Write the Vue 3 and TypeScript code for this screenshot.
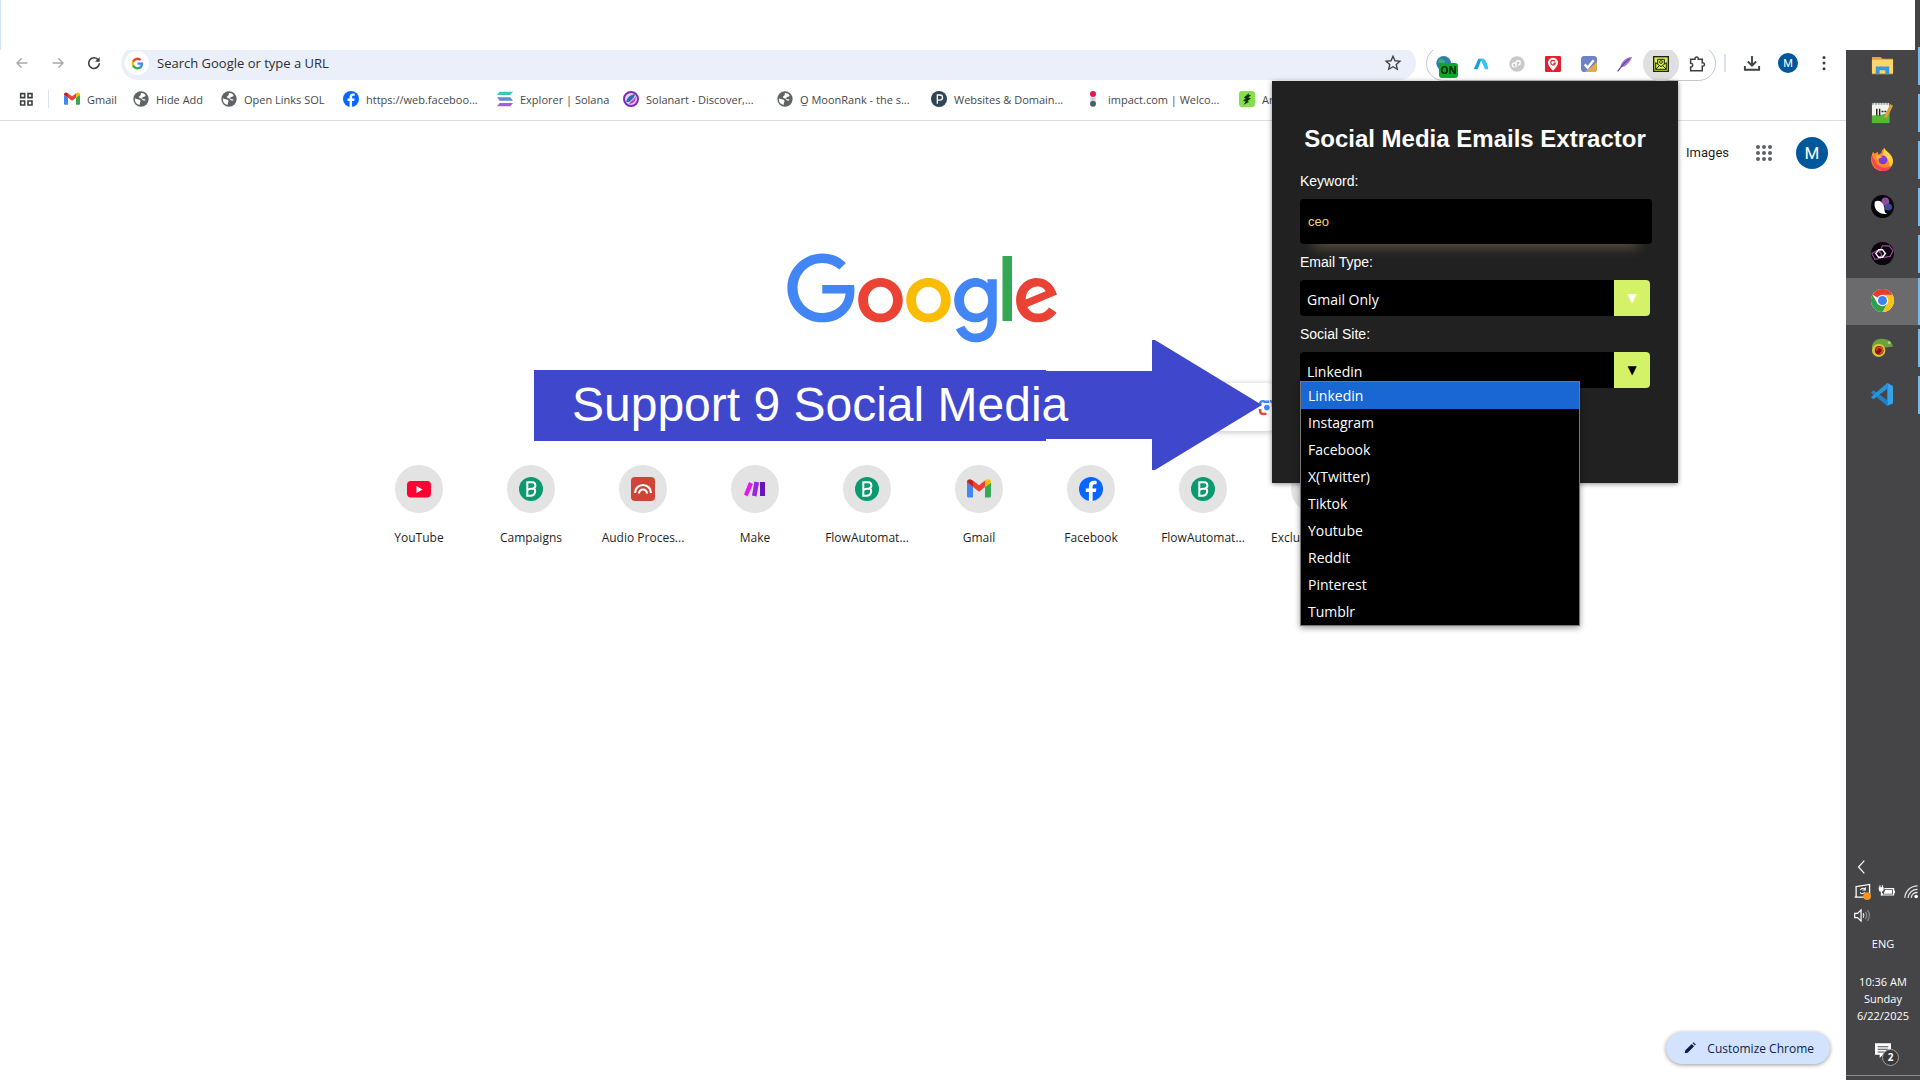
<script setup lang="ts">
import { ref } from 'vue'

interface Entry {
  icon: string
  label: string
}

// Inner markup of every 24x24 icon
const icons: Record<string, string> = {
  back: '<path d="M20 12H4.500M11.500 5l-7 7 7 7" fill="none" stroke="#a5a8ab" stroke-width="2"/>',
  forward: '<path d="M4 12h15.500M12.500 5l7 7-7 7" fill="none" stroke="#a5a8ab" stroke-width="2"/>',
  reload: '<path d="M18.500 7.500A8 8 0 1 0 20 12.500" fill="none" stroke="#3c4043" stroke-width="2.400"/><path d="M20.500 3v7h-7z" fill="#3c4043"/>',
  googleG:
    '<path d="M22.500 12.200c0-.7-.1-1.400-.2-2H12v4.100h5.900c-.3 1.400-1 2.500-2.200 3.300v2.800h3.600c2-1.900 3.200-4.700 3.200-8.200z" fill="#4285f4"/><path d="M12 23c3 0 5.500-1 7.300-2.600l-3.600-2.800c-1 .7-2.200 1.100-3.700 1.100-2.900 0-5.300-1.900-6.200-4.500H2.200V17C4 20.600 7.700 23 12 23z" fill="#34a853"/><path d="M5.800 14.100a6.600 6.600 0 0 1 0-4.200V7.100H2.200a11 11 0 0 0 0 9.800z" fill="#fbbc05"/><path d="M12 5.400c1.600 0 3.100.6 4.200 1.600L19.400 4A11 11 0 0 0 2.200 7.100l3.600 2.800C6.700 7.300 9.100 5.400 12 5.400z" fill="#ea4335"/>',
  star: '<path d="M12 3l2.700 6 6.500.6-4.900 4.300 1.400 6.400L12 17l-5.700 3.300 1.400-6.400-4.900-4.300 6.500-.6z" fill="none" stroke="#3c4043" stroke-width="1.800"/>',
  apps: '<path d="M4 4h6v6H4zM15 4h6v6h-6zM4 15h6v6H4zM15 15h6v6h-6z" fill="none" stroke="#3c4043" stroke-width="2.400"/>',
  gmail:
    '<path d="M1.600 20.500H6V10L0 5.500V19c0 .9.700 1.500 1.600 1.500z" fill="#4285f4"/><path d="M18 20.500h4.400c.9 0 1.600-.7 1.600-1.500V5.500L18 10z" fill="#34a853"/><path d="M18 3.800V10l6-4.500V5c0-2.300-2.600-3.500-4.400-2.200z" fill="#fbbc04"/><path d="M6 10V3.500l6 4.700 6-4.700V10l-6 4.700z" fill="#ea4335"/><path d="M0 5v.5L6 10V3.800L4.400 2.800C2.600 1.500 0 2.700 0 5z" fill="#c5221f"/>',
  globe:
    '<circle cx="12" cy="12" r="11.500" fill="#5f6368"/><path d="M3 11c2 2 6 1 8 3 1 2-1 3-1 7-5-1-8-5-7-10zM12 3c3 0 6 1 7 4-1 2-4 1-5 3-2 2 3 2 5 3-1 2-3 2-4 1-2-1-1-3-4-3-3-1-2-4 0-4z" fill="#fff"/>',
  facebook:
    '<circle cx="12" cy="12" r="12" fill="#0866ff"/><path d="M13.600 24v-9h3.200l.6-3.600h-3.800V9.200c0-1.300.7-2 2.100-2h1.900V4c-.8-.2-1.700-.3-2.700-.3-3 0-5 1.800-5 5v2.700H6.800V15h3.100v9z" fill="#fff"/>',
  solana:
    '<path d="M4 1h20l-4 5H0z" fill="#3cc9b4"/><path d="M0 9.500h20l4 5H4z" fill="#5f8fc9"/><path d="M4 18h20l-4 5H0z" fill="#a35fd6"/>',
  solanart:
    '<circle cx="12" cy="12" r="10.500" fill="#dfd3ff" stroke="#7f2bb8" stroke-width="3"/><path d="M5 17c0-6 6-12 13-12-1 6-5 8-8 11z" fill="#2d6cb0"/><path d="M9 19c3-4 8-6 10-11 1 7-4 12-10 11z" fill="#c236c9"/>',
  plesk:
    '<circle cx="12" cy="12" r="12" fill="#2f4454"/><path d="M9.500 19V6h4a3.800 3.800 0 0 1 0 7.600h-4" fill="none" stroke="#fff" stroke-width="2"/>',
  impact:
    '<circle cx="12" cy="4.500" r="4.500" fill="#e8134f"/><path d="M8 9.500h8v5H8z" fill="#c9d3d3"/><circle cx="12" cy="19" r="4.500" fill="#4a5f6c"/>',
  artLeaf:
    '<rect width="24" height="24" rx="5" fill="#86e04a"/><path d="M15 3L7 10l3 1-4 4 4 .5-3 5 8-4-2-1.500 5-4-4-1 4-4-4-.500z" fill="#14300b"/>',
  extGlobe:
    '<circle cx="10" cy="11" r="11" fill="#2b7fae"/><path d="M4 4c4 0 8 2 9 5l-5 3-6-3zM12 14l6-2v6l-6 2z" fill="#3fae74"/>',
  extA: '<path d="M1 20L8 4h5L7 20z" fill="#1b9fdb"/><path d="M11 4h5c4 3 6 9 7 16h-5z" fill="#35c4ee"/>',
  extP: '<circle cx="12" cy="12" r="11.500" fill="#c9c9c9"/><path d="M8 16.500a3 3 0 1 1 2.500-4.500M10.500 17V10a3.200 3.200 0 1 1 3.200 3.500" fill="none" stroke="#fff" stroke-width="2"/>',
  extPin:
    '<rect width="24" height="24" rx="2" fill="#e2202e"/><path d="M12 2.500a7.500 7.500 0 0 1 7.500 7.500c0 5-7.500 12-7.500 12S4.500 15 4.500 10A7.500 7.500 0 0 1 12 2.500z" fill="#fff"/><path d="M14.800 8a3.400 3.400 0 1 0 .6 2.700H12.500" fill="none" stroke="#e2202e" stroke-width="1.800"/>',
  extCheck:
    '<rect width="24" height="24" rx="5" fill="#6f82c9"/><path d="M24 9v10a5 5 0 0 1-5 5H6z" fill="#dfab4f"/><path d="M5.500 12.500l4.500 5 9-11" fill="none" stroke="#fff" stroke-width="3.600"/>',
  extFeather:
    '<path d="M23 1C14 2 6 8 5 17c7 0 13-5 18-16z" fill="#a07ad4"/><path d="M1 23C6 16 12 9 19 4" fill="none" stroke="#6b3fa6" stroke-width="1.800"/>',
  extMail:
    '<rect x="1" y="1" width="22" height="22" fill="#d9ee4a" stroke="#1f2408" stroke-width="2"/><path d="M4 10v10h16V10M7 12V5h10v7M4 10l8 6 8-6M4 20l6-6M20 20l-6-6" fill="none" stroke="#1f2408" stroke-width="1.500"/><circle cx="12" cy="9" r="2.200" fill="none" stroke="#1f2408" stroke-width="1.300"/>',
  puzzle:
    '<path d="M3.500 5.500h5.800c-.6-3.800 5-3.800 4.400 0h5.300v5c4-.5 4 5 0 4.400v6H3.500v-5c3.600.2 3.600-5 0-4.800z" fill="none" stroke="#3c4043" stroke-width="2"/>',
  download:
    '<path d="M12 2.500V15M6.500 10l5.500 5.500 5.500-5.500M2.500 16v5h19v-5" fill="none" stroke="#3c4043" stroke-width="2.500"/>',
  dots: '<circle cx="12" cy="4.500" r="2" fill="#3c4043"/><circle cx="12" cy="12" r="2" fill="#3c4043"/><circle cx="12" cy="19.500" r="2" fill="#3c4043"/>',
  grid: [4, 12, 20]
    .map((y) => [4, 12, 20].map((x) => `<circle cx="${x}" cy="${y}" r="2.700" fill="#5f6368"/>`).join(''))
    .join(''),
  lens: '<path d="M3 9V7a4 4 0 0 1 4-4h2M8 4h8" fill="none" stroke="#4285f4" stroke-width="3.500"/><path d="M3 14v3a4 4 0 0 0 4 4h5" fill="none" stroke="#ea4335" stroke-width="3.500"/><circle cx="12.500" cy="12" r="4" fill="#4285f4"/><path d="M21 11V7a4 4 0 0 0-4-4" fill="none" stroke="#4285f4" stroke-width="3.500"/>',
  youtube: '<rect y="4" width="24" height="16.500" rx="4" fill="#ff0033"/><path d="M9.500 9v7l6-3.500z" fill="#fff"/>',
  brevo:
    '<circle cx="12" cy="12" r="12" fill="#0b996e"/><path d="M8.300 18.800V5.200h5a3.200 3.200 0 0 1 1 6.200c3.300 1.200 2 7.400-2.600 7.400zM8.300 14c0-1.500 2-2.600 6-2.600" fill="none" stroke="#fff" stroke-width="2"/>',
  audio:
    '<rect width="24" height="24" rx="4" fill="#cf4436"/><path d="M4 16a8 8 0 0 1 16 0M8 16.500a4 4 0 0 1 8 0" fill="none" stroke="#fff" stroke-width="2.200"/>',
  make: '<path d="M6 5l4 2-5.500 12.500L1 17.500z" fill="#e01bea"/><path d="M11.500 4.500l4.500 1-2.500 14-4.500-1z" fill="#9a24e0"/><path d="M17 5h5v14h-5z" fill="#6516b8"/>',
  blank: '',
  pencil: '<path d="M3 21l1-5L15 5l4 4L8 20zM16.500 3.500L18 2l4 4-1.500 1.500z" fill="#0b1d4d"/>',
  explorer:
    '<path d="M1 3h9l2 2h11v16H1z" fill="#e3a72f"/><path d="M1 6h22v14H1z" fill="#fbd66b"/><path d="M5 21v-8h14v8h-4v-4H9v4z" fill="#3a96dd"/>',
  notepad:
    '<path d="M1 2h18v21H1z" fill="#f2f5ee"/><path d="M1 15c7 0 12-1 18-3v11H1z" fill="#56b635"/><path d="M1 3h18" stroke="#9aa39a" stroke-width="2" stroke-dasharray="2 1"/><path d="M6 8v7M9 8v7M11 11h2M14 11h2" stroke="#222" stroke-width="1.500"/><path d="M14 16l6-13 3 2-6 12-3 1z" fill="#d9a03c"/>',
  firefox:
    '<path d="M14 0c1 3 4 4 7 8 5 7 0 16-9 16S-2 15 1 7l1-3 2 2 3-2 1 3 3-2c0-2 1-4 3-5z" fill="#ff8a2a"/><path d="M14 0c1 3 4 4 7 8 3 5 2 10-2 13 1-7-2-12-7-14z" fill="#ffd43c"/><path d="M1 8c-1 8 3 15 11 16 5 0 8-2 10-6-7 5-15 2-18-5z" fill="#ff3e61"/><circle cx="12.500" cy="12.500" r="4.500" fill="#7a3ddb"/><path d="M5 8c3-1 5 0 7 2-3 0-4 1-5 3z" fill="#ffb23c"/>',
  petal:
    '<circle cx="12" cy="12" r="12" fill="#08070d"/><ellipse cx="15" cy="7" rx="4" ry="4.500" fill="#8d4c9e"/><ellipse cx="18" cy="12.500" rx="4" ry="3.500" fill="#414a9c"/><path d="M4 7c5-3 9 1 10 7 0 4 1 5 3 5.500C10 21 2 16 4 7z" fill="#fff"/>',
  rings:
    '<circle cx="12" cy="12" r="12" fill="#0b050d"/><path d="M12 4h7l4 5-3 6-7 1-4-6zM1 12l5-3 5 3-1 5-6 1z" fill="none" stroke="#9a4a9e" stroke-width="1.200"/><path d="M8 8h4l3 4-3 4H8l-3-4z" fill="none" stroke="#fff" stroke-width="1.500"/>',
  chrome:
    '<circle cx="12" cy="12" r="12" fill="#fff"/><path d="M12 12L1.600 6A12 12 0 0 1 22.400 6z" fill="#e33b2e"/><path d="M12 6h10.400A12 12 0 0 1 12 24l5.200-9z" fill="#fbc116"/><path d="M1.600 6l5.200 9L12 18l5 -3-5 9A12 12 0 0 1 1.600 6z" fill="#2da04b"/><circle cx="12" cy="12" r="6" fill="#fff"/><circle cx="12" cy="12" r="4.700" fill="#3f83f0"/>',
  chameleon:
    '<path d="M1 12C1 5 7 2 13 3c5 0 9 3 10 8l-8 1c-4-2-8-1-8 3z" fill="#6fa03f"/><circle cx="19" cy="7" r="1.500" fill="#b6d67a"/><circle cx="8" cy="15" r="7" fill="#d8c431"/><circle cx="8.500" cy="15" r="4.500" fill="#7d1418"/><path d="M6 15a3 3 0 1 1 3 3" fill="none" stroke="#e24a2b" stroke-width="1.500"/>',
  vscode:
    '<path d="M17 0l6 3v18l-6 3z" fill="#35a3ea"/><path d="M17 24L0 10l2.500-2.500L17 18z" fill="#1f82c8"/><path d="M17 0v6L2.500 17 0 14.500z" fill="#2a93dc"/>',
  chevron: '<path d="M16 1L6 12l10 11" fill="none" stroke="#fff" stroke-width="2"/>',
  update:
    '<path d="M3 5l19-3v18H3zM1 20h14" fill="none" stroke="#fff" stroke-width="1.800"/><path d="M9 10c2-4 7-3 7 0M16 6v4h-4M15 13c-2 3-6 3-6 0" fill="none" stroke="#fff" stroke-width="1.500"/><circle cx="18.500" cy="18.500" r="5.500" fill="#f7941d"/>',
  battery:
    '<path d="M9 8h13v9H6v-3" fill="none" stroke="#fff" stroke-width="1.600"/><path d="M10 10h10v5H8z" fill="#fff"/><path d="M22 10.500h2v4h-2zM1 6h7v3a3.500 3.500 0 0 1-7 0zM2 3h1.500v3H2zM5.500 3H7v3H5.500zM4 12h1.500v6H4z" fill="#fff"/>',
  wifi: '<path d="M4 21A18 18 0 0 1 22 4M8.500 21A13 13 0 0 1 22 9M13 21a8 8 0 0 1 9-7.500" fill="none" stroke="#e4e4e4" stroke-width="1.800"/><circle cx="20" cy="19" r="2.500" fill="#fff"/>',
  speaker:
    '<path d="M1 9h4l5-5v16l-5-5H1z" fill="none" stroke="#fff" stroke-width="1.700"/><path d="M13 9c1.500 2 1.500 4 0 6" fill="none" stroke="#fff" stroke-width="1.600"/><path d="M16 7c2.500 3 2.500 7 0 10M19 4.500c3.500 4.500 3.500 10.500 0 15" fill="none" stroke="#8d8d8f" stroke-width="1.600"/>',
  notice: '<path d="M0 2h24v17H12l-5 5v-5H0z" fill="#fff"/><path d="M4 7h16M4 11h16M4 15h10" stroke="#454547" stroke-width="1.600"/>',
}

const bookmarks: Entry[] = [
  { icon: 'gmail', label: 'Gmail' },
  { icon: 'globe', label: 'Hide Add' },
  { icon: 'globe', label: 'Open Links SOL' },
  { icon: 'facebook', label: 'https://web.faceboo...' },
  { icon: 'solana', label: 'Explorer | Solana' },
  { icon: 'solanart', label: 'Solanart - Discover,...' },
  { icon: 'globe', label: 'O̲ MoonRank - the s...' },
  { icon: 'plesk', label: 'Websites & Domain...' },
  { icon: 'impact', label: 'impact.com | Welco...' },
  { icon: 'artLeaf', label: 'Ar' },
]

const extensions = ['extGlobe', 'extA', 'extP', 'extPin', 'extCheck', 'extFeather', 'extMail', 'puzzle']

const shortcuts: Entry[] = [
  { icon: 'youtube', label: 'YouTube' },
  { icon: 'brevo', label: 'Campaigns' },
  { icon: 'audio', label: 'Audio Proces...' },
  { icon: 'make', label: 'Make' },
  { icon: 'brevo', label: 'FlowAutomat...' },
  { icon: 'gmail', label: 'Gmail' },
  { icon: 'facebook', label: 'Facebook' },
  { icon: 'brevo', label: 'FlowAutomat...' },
  { icon: 'blank', label: 'Exclu' },
]

const apps = ['explorer', 'notepad', 'firefox', 'petal', 'rings', 'chrome', 'chameleon', 'vscode']
const sites = ['Linkedin', 'Instagram', 'Facebook', 'X(Twitter)', 'Tiktok', 'Youtube', 'Reddit', 'Pinterest', 'Tumblr']

const keyword = ref('ceo')
const emailType = ref('Gmail Only')
const site = ref('Linkedin')
</script>

<template>
  <div class="desktop">
    <div class="browser">
      <header class="toolbar">
        <button class="nav" aria-label="Back"><svg viewBox="0 0 24 24" v-html="icons.back" /></button>
        <button class="nav" aria-label="Forward"><svg viewBox="0 0 24 24" v-html="icons.forward" /></button>
        <button class="nav" aria-label="Reload"><svg viewBox="0 0 24 24" v-html="icons.reload" /></button>
        <div class="omnibox">
          <span class="engine"><svg viewBox="0 0 24 24" v-html="icons.googleG" /></span>
          <input type="text" aria-label="Address bar" placeholder="Search Google or type a URL" />
          <button class="star" aria-label="Bookmark"><svg viewBox="0 0 24 24" v-html="icons.star" /></button>
        </div>
        <div class="extensions">
          <button v-for="name in extensions" :key="name" class="ext" :class="{ active: name === 'extMail' }" :aria-label="name">
            <svg viewBox="0 0 24 24" v-html="icons[name]" />
            <span v-if="name === 'extGlobe'" class="on">ON</span>
          </button>
        </div>
        <i class="rule" />
        <button class="ext big" aria-label="Downloads"><svg viewBox="0 0 24 24" v-html="icons.download" /></button>
        <button class="ext" aria-label="Profile"><span class="mini-avatar">M</span></button>
        <button class="ext big" aria-label="Menu"><svg viewBox="0 0 24 24" v-html="icons.dots" /></button>
      </header>

      <nav class="bookmarks">
        <button class="apps" aria-label="Apps"><svg viewBox="0 0 24 24" v-html="icons.apps" /></button>
        <i class="rule" />
        <div class="marks">
          <a v-for="b in bookmarks" :key="b.label" href="#">
            <svg viewBox="0 0 24 24" v-html="icons[b.icon]" /><span>{{ b.label }}</span>
          </a>
        </div>
      </nav>

      <main class="page">
        <div class="account">
          <a href="#">Images</a>
          <button aria-label="Google apps"><svg viewBox="0 0 24 24" v-html="icons.grid" /></button>
          <button class="avatar" aria-label="Account">M</button>
        </div>
        <svg class="logo" viewBox="0 0 272 92" role="img" aria-label="Google">
          <path fill="#EA4335" d="M115.75 47.18c0 12.77-9.99 22.18-22.25 22.18s-22.25-9.41-22.25-22.18C71.25 34.32 81.24 25 93.500 25s22.25 9.32 22.25 22.18zm-9.74 0c0-7.98-5.79-13.44-12.51-13.44S80.99 39.2 80.99 47.18c0 7.900 5.79 13.44 12.51 13.44s12.51-5.55 12.51-13.44z" />
          <path fill="#FBBC05" d="M163.75 47.18c0 12.77-9.99 22.18-22.25 22.18s-22.25-9.41-22.25-22.18c0-12.85 9.99-22.18 22.25-22.18s22.25 9.32 22.25 22.18zm-9.74 0c0-7.98-5.79-13.44-12.51-13.44s-12.51 5.46-12.51 13.44c0 7.900 5.79 13.44 12.51 13.44s12.51-5.55 12.51-13.44z" />
          <path fill="#4285F4" d="M209.75 26.34v39.82c0 16.38-9.66 23.07-21.08 23.07-10.75 0-17.22-7.19-19.66-13.07l8.48-3.53c1.51 3.61 5.21 7.87 11.17 7.87 7.31 0 11.84-4.51 11.84-13v-3.19h-.34c-2.18 2.69-6.38 5.04-11.68 5.04-11.09 0-21.25-9.66-21.25-22.09 0-12.52 10.16-22.26 21.25-22.26 5.29 0 9.49 2.35 11.68 4.96h.34v-3.61h9.25zm-8.56 20.92c0-7.81-5.21-13.52-11.84-13.52-6.72 0-12.35 5.71-12.35 13.52 0 7.73 5.63 13.36 12.35 13.36 6.63 0 11.84-5.63 11.84-13.36z" />
          <path fill="#34A853" d="M225 3v65h-9.500V3h9.500z" />
          <path fill="#EA4335" d="M262.02 54.48l7.56 5.04c-2.44 3.61-8.32 9.83-18.48 9.83-12.6 0-22.01-9.74-22.01-22.18 0-13.19 9.49-22.18 20.92-22.18 11.51 0 17.14 9.16 18.98 14.11l1.01 2.52-29.65 12.28c2.27 4.45 5.8 6.72 10.75 6.72 4.96 0 8.4-2.44 10.92-6.14zm-23.27-7.98l19.82-8.23c-1.09-2.77-4.37-4.7-8.23-4.7-4.95 0-11.84 4.37-11.59 12.93z" />
          <path fill="#4285F4" d="M35.29 41.41V32H67c.31 1.64.47 3.58.47 5.68 0 7.06-1.93 15.79-8.15 22.01-6.05 6.3-13.78 9.66-24.02 9.66C16.32 69.35.36 53.89.36 34.91.36 15.93 16.32.47 35.3.47c10.5 0 17.98 4.12 23.6 9.49l-6.64 6.64c-4.03-3.78-9.49-6.72-16.97-6.72-13.86 0-24.7 11.17-24.7 25.03 0 13.86 10.84 25.03 24.7 25.03 8.99 0 14.43-3.61 17.91-7.09 2.82-2.82 4.68-6.85 5.41-12.35l-23.32-.01z" />
        </svg>
        <div class="search">
          <input type="search" aria-label="Search" />
          <svg viewBox="0 0 24 24" v-html="icons.lens" />
        </div>
        <div class="shortcuts">
          <a v-for="(s, i) in shortcuts" :key="i" href="#">
            <span class="disc"><svg viewBox="0 0 24 24" v-html="icons[s.icon]" /></span>
            <span class="name">{{ s.label }}</span>
          </a>
        </div>
        <button class="customize"><svg viewBox="0 0 24 24" v-html="icons.pencil" />Customize Chrome</button>
      </main>

      <div class="callout">
        <svg viewBox="0 0 728 130"><path d="M0 30h512v1h106V0h3L728 65 621 130h-3V99H512v2H0z" fill="#3f48cc" /></svg>
        <span>Support 9 Social Media</span>
      </div>

      <section class="popup">
        <h1>Social Media Emails Extractor</h1>
        <label for="keyword">Keyword:</label>
        <input id="keyword" v-model="keyword" type="text" />
        <label for="email-type">Email Type:</label>
        <div class="select">
          <select id="email-type" v-model="emailType"><option>Gmail Only</option></select>
          <span class="arrow">▼</span>
        </div>
        <label for="site">Social Site:</label>
        <div class="select open">
          <select id="site" v-model="site"><option v-for="s in sites" :key="s">{{ s }}</option></select>
          <span class="arrow">▼</span>
          <ul role="listbox" aria-label="Social Site">
            <li v-for="s in sites" :key="s" role="option" :aria-selected="s === site" :class="{ picked: s === site }" @click="site = s">{{ s }}</li>
          </ul>
        </div>
      </section>
    </div>

    <aside class="taskbar">
      <div class="running">
        <button v-for="a in apps" :key="a" :class="{ current: a === 'chrome' }" :aria-label="a">
          <svg viewBox="0 0 24 24" v-html="icons[a]" />
        </button>
      </div>
      <div class="tray">
        <svg v-for="t in ['chevron', 'update', 'battery', 'wifi', 'speaker']" :key="t" :class="t" viewBox="0 0 24 24" v-html="icons[t]" />
      </div>
      <div class="lang">ENG</div>
      <div class="clock"><span>10:36 AM</span><span>Sunday</span><span>6/22/2025</span></div>
      <button class="notice" aria-label="Notifications"><svg viewBox="0 0 24 24" v-html="icons.notice" /><b>2</b></button>
    </aside>

    <div class="cover" />
  </div>
</template>

<style>
body {
  background: #fff;
}
</style>

<style scoped>
.desktop {
  position: relative;
  display: flex;
  min-height: 100vh;
  font-family: 'Open Sans', 'Noto Sans', sans-serif;
  color: #1f1f1f;
  background: #fff;
}
.desktop * {
  box-sizing: border-box;
}
button {
  display: flex;
  align-items: center;
  justify-content: center;
  padding: 0;
  border: 0;
  background: none;
  font: inherit;
  color: inherit;
}
a {
  color: inherit;
  text-decoration: none;
}
svg {
  display: block;
  flex: none;
  overflow: visible;
}
.cover {
  position: absolute;
  top: 0;
  left: 0;
  right: 5px;
  height: 50px;
  background: #fff;
  border-left: 1px solid #d3e1f8;
}
.browser {
  position: relative;
  flex: 1;
  min-width: 0;
  display: flex;
  flex-direction: column;
  padding-top: 46px;
}

/* toolbar */
.toolbar {
  display: flex;
  align-items: center;
  height: 34px;
  padding: 0 4px;
}
.nav {
  width: 36px;
  height: 34px;
}
.nav svg {
  width: 16px;
  height: 16px;
}
.omnibox {
  flex: 1;
  display: flex;
  align-items: center;
  height: 34px;
  margin: 0 10px 0 9px;
  padding: 0 14px 0 4px;
  border-radius: 17px;
  background: #ebeff9;
}
.engine {
  display: grid;
  place-items: center;
  width: 24px;
  height: 24px;
  border-radius: 50%;
  background: #fff;
}
.engine svg {
  width: 13px;
  height: 13px;
}
.omnibox input {
  flex: 1;
  min-width: 0;
  padding: 0 8px;
  border: 0;
  background: none;
  font: 13px/20px 'Open Sans', sans-serif;
}
.omnibox input::placeholder {
  color: #2b2d30;
}
.star svg {
  width: 18px;
  height: 18px;
}
.extensions {
  display: flex;
  height: 35px;
  margin-bottom: -1px;
  border: 1px solid #c4c6c9;
  border-radius: 18px;
}
.ext {
  position: relative;
  flex: none;
  width: 36px;
  height: 34px;
}
.ext svg {
  width: 16px;
  height: 16px;
}
.ext:last-child svg,
.big svg {
  width: 18px;
  height: 18px;
}
.ext.active {
  background: #dfdfdf;
  border-radius: 17px;
}
.on {
  position: absolute;
  left: 12px;
  top: 16px;
  width: 19px;
  height: 15px;
  border-radius: 3px;
  background: #12a52c;
  font: bold 10px/15px 'Open Sans', sans-serif;
  color: #052a0a;
}
.rule {
  flex: none;
  width: 2px;
  height: 18px;
  margin: 0 8px;
  background: #d6e2f8;
}
.mini-avatar,
.avatar {
  display: grid;
  place-items: center;
  border-radius: 50%;
  background: #01579b;
  color: #fff;
  font-family: Roboto, sans-serif;
}
.mini-avatar {
  width: 20px;
  height: 20px;
  font-size: 11px;
}

/* bookmarks */
.bookmarks {
  display: flex;
  align-items: center;
  height: 41px;
  padding: 0 0 2px 18px;
  border-bottom: 1px solid #dcdddf;
  font-size: 11px;
  color: #45484b;
}
.apps svg {
  width: 16px;
  height: 16px;
}
.bookmarks .rule {
  width: 1px;
  margin: 0 15px 0 14px;
}
.marks {
  display: grid;
  grid-template-columns: 69px 88px 122px 154px 126px repeat(5, 154px);
  white-space: nowrap;
}
.marks a {
  display: flex;
  align-items: center;
  gap: 7px;
}
.marks svg {
  width: 16px;
  height: 16px;
}

/* new tab page */
.page {
  flex: 1;
  display: flex;
  flex-direction: column;
  align-items: center;
}
.account {
  align-self: stretch;
  display: flex;
  align-items: center;
  justify-content: flex-end;
  gap: 26px;
  height: 64px;
  padding-right: 18px;
  font: 13px/20px Roboto, sans-serif;
}
.account svg {
  width: 18px;
  height: 18px;
}
.account .avatar {
  width: 32px;
  height: 32px;
  margin-left: -3px;
  font-size: 17px;
}
.logo {
  width: 272px;
  height: 92px;
  margin-top: 68px;
}
.search {
  display: flex;
  align-items: center;
  width: 734px;
  height: 48px;
  margin-top: 38px;
  padding-right: 15px;
  border-radius: 24px;
  box-shadow: 0 1px 6px rgba(32, 33, 36, 0.28);
}
.search input {
  flex: 1;
  border: 0;
  background: none;
}
.search svg {
  width: 17px;
  height: 17px;
}
.shortcuts {
  display: grid;
  grid-template-columns: repeat(10, 112px);
  margin-top: 34px;
  font-size: 12px;
  line-height: 18px;
  white-space: nowrap;
}
.shortcuts a {
  display: flex;
  flex-direction: column;
  align-items: center;
  gap: 16px;
}
.shortcuts a:last-child .name {
  width: 88px;
}
.disc {
  display: grid;
  place-items: center;
  width: 48px;
  height: 48px;
  border-radius: 50%;
  background: #e2e3e2;
}
.disc svg {
  width: 24px;
  height: 24px;
}
.customize {
  align-self: flex-end;
  gap: 10px;
  height: 32px;
  margin: auto 16px 16px 0;
  padding: 0 16px 0 17px;
  border-radius: 16px;
  background: #d3e3fd;
  box-shadow: 0 1px 4px rgba(0, 0, 0, 0.4);
  font-size: 12px;
  color: #0b1d4d;
}
.customize svg {
  width: 14px;
  height: 14px;
}

/* arrow drawn over the page */
.callout {
  position: absolute;
  top: 340px;
  left: calc(50% - 389px);
  width: 728px;
  height: 130px;
  display: flex;
  align-items: center;
  padding-left: 38px;
  font: 48px/60px 'Liberation Sans', Arial, sans-serif;
  color: #fff;
  white-space: nowrap;
}
.callout svg {
  position: absolute;
  inset: 0;
}
.callout span {
  position: relative;
}

/* extension popup */
.popup {
  position: absolute;
  top: 81px;
  right: 168px;
  display: flex;
  flex-direction: column;
  gap: 10px;
  width: 406px;
  padding: 44px 28px 95px;
  background: #212121;
  box-shadow: 0 1px 5px rgba(0, 0, 0, 0.45);
  font: 14px/16px 'Liberation Sans', Arial, sans-serif;
  color: #fff;
}
.popup h1 {
  margin: 0 0 10px;
  font-size: 24px;
  line-height: 28px;
  text-align: center;
  white-space: nowrap;
}
.popup input {
  width: calc(100% + 2px);
  height: 45px;
  padding: 0 8px;
  border: 0;
  border-radius: 4px;
  background: #000;
  box-shadow: 0 18px 12px -14px #5a4c3a;
  font: 13px/16px 'Liberation Sans', Arial, sans-serif;
  color: #f8d477;
}
.select {
  position: relative;
  display: flex;
  height: 36px;
}
.select select {
  flex: 1;
  appearance: none;
  padding: 4px 7px 0;
  border: 0;
  border-radius: 4px;
  background: #000;
  font: 14px/20px 'Open Sans', sans-serif;
  color: #fff;
}
.arrow {
  position: absolute;
  top: 0;
  right: 0;
  width: 36px;
  height: 36px;
  border-radius: 0 4px 4px 0;
  background: #d4f267;
  font: 12px/36px 'DejaVu Sans', sans-serif;
  text-align: center;
  pointer-events: none;
}
.open .arrow {
  color: #000;
}
.select ul {
  position: absolute;
  top: 29px;
  left: 0;
  width: 280px;
  margin: 0;
  padding: 0;
  border: 1px solid #767676;
  background: #000;
  box-shadow: 0 2px 6px rgba(0, 0, 0, 0.4);
  list-style: none;
  font: 14px/27px 'Open Sans', sans-serif;
}
.select li {
  height: 27px;
  padding-left: 7px;
}
.select .picked {
  background: #1967d2;
}

/* taskbar */
.taskbar {
  display: flex;
  flex-direction: column;
  width: 74px;
  padding-top: 43px;
  background: #454547;
  color: #fff;
  font-size: 11px;
  line-height: 17px;
  text-align: center;
}
.running button {
  position: relative;
  width: 100%;
  height: 47px;
  padding: 0 1px 2px 0;
}
.running svg {
  width: 23px;
  height: 23px;
}
.running button::after {
  content: '';
  position: absolute;
  top: 4px;
  bottom: 5px;
  right: 0;
  width: 2px;
  background: #76b9ed;
}
.running .current {
  background: #6b6b6d;
}
.running .current::after {
  top: 0;
  bottom: 0;
}
.tray {
  display: grid;
  grid-template-columns: repeat(3, 24px);
  grid-auto-rows: 24px;
  place-items: center;
  margin-top: auto;
  padding-left: 4px;
}
.tray svg {
  width: 17px;
  height: 17px;
}
.tray .chevron {
  grid-column: 1 / 4;
  justify-self: start;
  width: 14px;
  height: 14px;
  margin-left: 5px;
}
.lang {
  margin-top: 8px;
}
.clock {
  display: flex;
  flex-direction: column;
  margin-top: 21px;
}
.notice {
  position: relative;
  height: 52px;
  margin-bottom: 4px;
  border-bottom: 1px solid #8c8c8e;
}
.notice svg {
  width: 16px;
  height: 16px;
}
.notice b {
  position: absolute;
  left: 36px;
  top: 25px;
  width: 17px;
  height: 17px;
  border: 1px solid #a0a0a2;
  border-radius: 50%;
  background: #3a3a3c;
  font: bold 10px/15px 'Open Sans', sans-serif;
}
</style>
